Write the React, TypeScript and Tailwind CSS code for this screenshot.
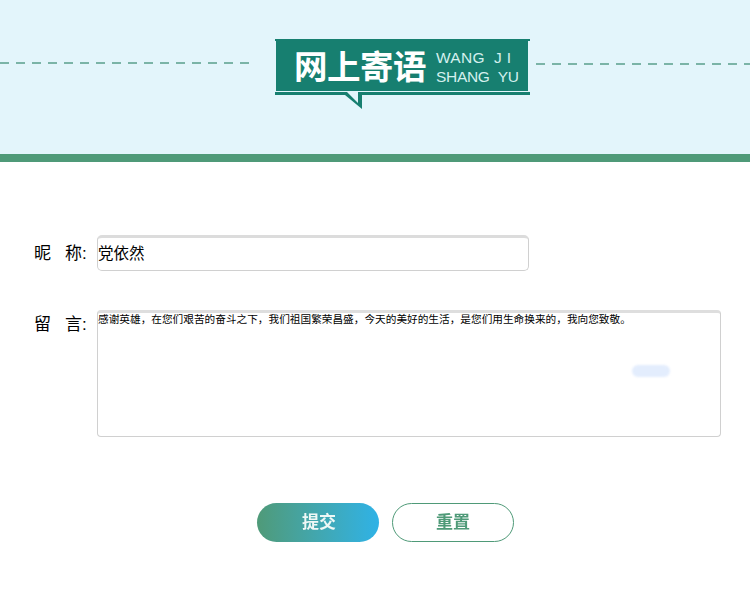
const cjk = "font-['Liberation_Sans','Noto_Sans_CJK_SC',sans-serif]";

function Dashes({ className }: { className: string }) {
  return (
    <svg className={className} height="2" aria-hidden="true">
      <line x1="0" y1="1" x2="100%" y2="1" stroke="#5a9f8c" strokeWidth="1.5" strokeDasharray="9 7" />
    </svg>
  );
}

function Logo() {
  return (
    <div className="relative h-[70px] w-[256px] shrink-0 self-start">
      <svg className="absolute inset-0" width="256" height="70" viewBox="0 0 256 70" aria-hidden="true">
        <path d="M0 0H255V2H253V52H1V2H0Z" fill="#177f70" />
        <path d="M0 53H72L83 64V53H255V56H87V70L70 56H0Z" fill="#177f70" />
      </svg>
      <div className="relative flex h-[52px] items-center pl-[19px]">
        <span className="whitespace-nowrap text-[33.500px] font-bold leading-none tracking-[-0.5px] text-white font-['Noto_Sans_CJK_SC',sans-serif]">
          网上寄语
        </span>
        <div className="ml-[10px] pt-[3px] text-[15.500px] leading-[19px] text-[#d4f0ee] font-['Liberation_Sans',sans-serif]">
          <div className="whitespace-nowrap tracking-[0.3px]">WANG&nbsp;&nbsp;J I</div>
          <div className="whitespace-nowrap tracking-[-0.3px]">SHANG&nbsp;&nbsp;YU</div>
        </div>
      </div>
    </div>
  );
}

export default function App() {
  return (
    <div className={`h-[595px] w-[750px] overflow-hidden bg-white ${cjk}`}>
      <header className="flex h-[162px] items-start border-b-[8px] border-[#4f9a78] bg-[#e3f5fb] pt-[39px]">
        <Dashes className="mt-[23px] w-[254px] shrink-0" />
        <div className="ml-[21px]">
          <Logo />
        </div>
        <Dashes className="ml-[5px] mt-[24px] flex-1" />
      </header>

      <main className="pl-[34px] pt-[73px]">
        <div className="flex items-center">
          <div className="flex w-[63px] shrink-0 text-[17px] leading-none text-black">
            <span className="w-[31px]">昵</span>
            <span>称:</span>
          </div>
          <div className="flex h-[36px] w-[432px] items-center rounded-[5px] border border-[#d0d0d0] border-t-[3px] border-t-[#dcdcdc] text-[15.500px] text-black">
            党依然
          </div>
        </div>

        <div className="mt-[39px] flex items-start">
          <div className="flex w-[63px] shrink-0 pt-[6px] text-[17px] leading-none text-black">
            <span className="w-[31px]">留</span>
            <span>言:</span>
          </div>
          <div className="relative h-[127px] w-[624px] rounded-[4px] border border-[#d0d0d0] border-t-[3px] border-t-[#dedede] text-[10.670px] leading-[13px] text-black">
            <span className="whitespace-nowrap">
              感谢英雄，在您们艰苦的奋斗之下，我们祖国繁荣昌盛，今天的美好的生活，是您们用生命换来的，我向您致敬。
            </span>
            <div className="absolute left-[534px] top-[52px] h-[12px] w-[38px] rounded-full bg-[#e3edfd] blur-[1px]" />
          </div>
        </div>

        <div className="mt-[66px] flex gap-[13px] pl-[223px]">
          <button className="h-[39px] w-[122px] rounded-full bg-gradient-to-r from-[#4f9a78] to-[#2fb2e6] text-[17px] font-bold text-[#eef8f6]">
            <span className="inline-block translate-x-[1px] blur-[0.4px]">提交</span>
          </button>
          <button className="h-[39px] w-[122px] rounded-full border border-[#4f9a78] bg-white text-[17px] font-bold text-[#4f9a78]">
            <span className="inline-block blur-[0.4px]">重置</span>
          </button>
        </div>
      </main>
    </div>
  );
}
